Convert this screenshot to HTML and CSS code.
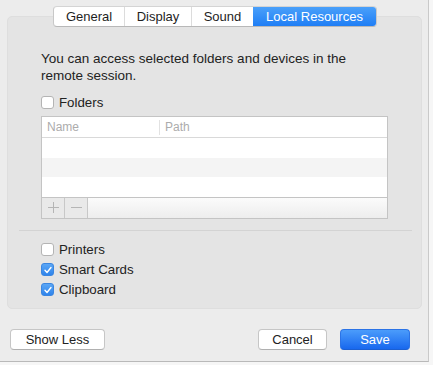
FILE: index.html
```html
<!DOCTYPE html>
<html>
<head>
<meta charset="utf-8">
<link rel="stylesheet" href="styles.css">
</head>
<body>
<div class="window">
  <div class="tabs">
    <div class="tab t-general">General</div>
    <div class="tab t-display">Display</div>
    <div class="tab t-sound">Sound</div>
    <div class="tab t-local active">Local Resources</div>
  </div>
  <div class="group">
    <p class="intro">You can access selected folders and devices in the remote session.</p>
    <label class="check"><span class="box"></span><span>Folders</span></label>
    <div class="table">
      <div class="thead">
        <div class="col-name">Name</div>
        <div class="col-path">Path</div>
      </div>
      <div class="row"></div>
      <div class="row alt"></div>
      <div class="row"></div>
      <div class="tbar">
        <div class="tbtn">
          <svg width="13" height="13" viewBox="0 0 13 13"><path d="M6.5 1v11M1 6.5h11" stroke="#b5b5b5" stroke-width="1" fill="none"/></svg>
        </div>
        <div class="tbtn">
          <svg width="13" height="13" viewBox="0 0 13 13"><path d="M1 6.5h11" stroke="#b5b5b5" stroke-width="1" fill="none"/></svg>
        </div>
        <div class="tfill"></div>
      </div>
    </div>
    <div class="sep"></div>
    <div class="checks">
      <label class="check"><span class="box"></span><span>Printers</span></label>
      <label class="check"><span class="box on"><svg width="10" height="10" viewBox="0 0 10 10"><path d="M2 5.3l2 2.2 4-5" stroke="#fff" stroke-width="1.4" fill="none" stroke-linecap="round" stroke-linejoin="round"/></svg></span><span>Smart Cards</span></label>
      <label class="check"><span class="box on"><svg width="10" height="10" viewBox="0 0 10 10"><path d="M2 5.3l2 2.2 4-5" stroke="#fff" stroke-width="1.4" fill="none" stroke-linecap="round" stroke-linejoin="round"/></svg></span><span>Clipboard</span></label>
    </div>
  </div>
  <div class="footer">
    <button class="btn show-less">Show Less</button>
    <div class="spacer"></div>
    <button class="btn cancel">Cancel</button>
    <button class="btn primary save">Save</button>
  </div>
</div>
</body>
</html>
```
FILE: styles.css
```css
html, body {
  margin: 0;
  padding: 0;
  background: #f6f6f6;
}
body {
  font-family: "Liberation Sans", Arial, sans-serif;
  font-size: 13px;
  color: #222;
  width: 433px;
  height: 365px;
  overflow: hidden;
}
.window {
  width: 429px;
  height: 362px;
  background: #ececec;
  border-right: 1px solid #c9c9c9;
  border-bottom: 1px solid #b9b9b9;
  box-sizing: border-box;
  display: flex;
  flex-direction: column;
  padding: 6px 0 0 0;
}
.tabs {
  display: flex;
  margin-left: 53px;
  width: 324px;
  height: 21px;
  background: #fff;
  border: 1px solid #c8c8c8;
  border-top-color: #d4d4d4;
  border-bottom-color: #b8b8b8;
  border-radius: 4px;
  box-sizing: border-box;
  position: relative;
  z-index: 2;
  margin-bottom: -11px;
  overflow: hidden;
}
.tab {
  display: flex;
  align-items: center;
  justify-content: center;
  height: 100%;
  font-size: 13px;
  color: #1e1e1e;
  border-right: 1px solid #dcdcdc;
  box-sizing: border-box;
}
.t-general { width: 71px; }
.t-display { width: 67px; }
.t-sound { width: 61px; border-right: none; }
.t-local { flex: 1; }
.tab.active {
  background: linear-gradient(#4aa0fa, #1f7ef5);
  color: #fff;
  border-right: none;
}
.group {
  margin-left: 7px;
  width: 415px;
  height: 293px;
  background: #e4e4e4;
  border: 1px solid #dedede;
  border-radius: 5px;
  box-sizing: border-box;
  padding: 33px 0 0 33px;
}
.intro {
  margin: 0;
  width: 340px;
  line-height: 17px;
  font-size: 13.5px;
  color: #222;
}
.check {
  display: flex;
  align-items: center;
  height: 20px;
  gap: 5px;
  font-size: 13.3px;
}
.group > .check {
  margin-top: 8px;
}
.box {
  width: 13px;
  height: 13px;
  box-sizing: border-box;
  background: #fff;
  border: 1px solid #b4b4b4;
  border-radius: 3px;
  display: flex;
  align-items: center;
  justify-content: center;
}
.box.on {
  background: linear-gradient(#5aa6f5, #2f84ec);
  border-color: #3b86e0;
}
.table {
  margin-top: 4px;
  width: 347px;
  background: #fff;
  border: 1px solid #c4c4c4;
  box-sizing: border-box;
  display: flex;
  flex-direction: column;
}
.thead {
  display: flex;
  height: 21px;
  border-bottom: 1px solid #d9d9d9;
  box-sizing: border-box;
  color: #acacac;
  font-size: 12px;
  align-items: center;
}
.col-name {
  width: 118px;
  padding-left: 5px;
  box-sizing: border-box;
  border-right: 1px solid #e2e2e2;
  height: 15px;
  line-height: 15px;
}
.col-path {
  padding-left: 5px;
  height: 15px;
  line-height: 15px;
}
.row {
  height: 19.5px;
}
.row.alt {
  background: #f4f4f4;
}
.tbar {
  display: flex;
  height: 21px;
  border-top: 1px solid #c4c4c4;
  background: linear-gradient(#fbfbfb, #ededed);
  box-sizing: border-box;
}
.tbtn {
  width: 23px;
  display: flex;
  align-items: center;
  justify-content: center;
  border-right: 1px solid #c8c8c8;
  background: #e9e9e9;
  box-sizing: border-box;
}
.tfill {
  flex: 1;
}
.sep {
  margin: 11px 0 0 -22px;
  width: 393px;
  height: 1px;
  background: #d3d3d3;
}
.checks {
  margin-top: 9px;
  display: flex;
  flex-direction: column;
}
.footer {
  display: flex;
  align-items: center;
  padding: 20px 18px 0 10px;
}
.spacer { flex: 1; }
.btn {
  font-family: "Liberation Sans", Arial, sans-serif;
  font-size: 13px;
  height: 21px;
  padding: 0;
  border: 1px solid #c6c6c6;
  border-bottom-color: #b0b0b0;
  border-radius: 4px;
  background: #fff;
  color: #222;
  box-sizing: border-box;
}
.show-less { width: 95px; }
.cancel { width: 69px; margin-right: 13px; }
.save {
  width: 70px;
  background: linear-gradient(#4b9cfb, #1868ee);
  border-color: #2b73e6;
  border-bottom-color: #1b5fd2;
  color: #fff;
}
```
